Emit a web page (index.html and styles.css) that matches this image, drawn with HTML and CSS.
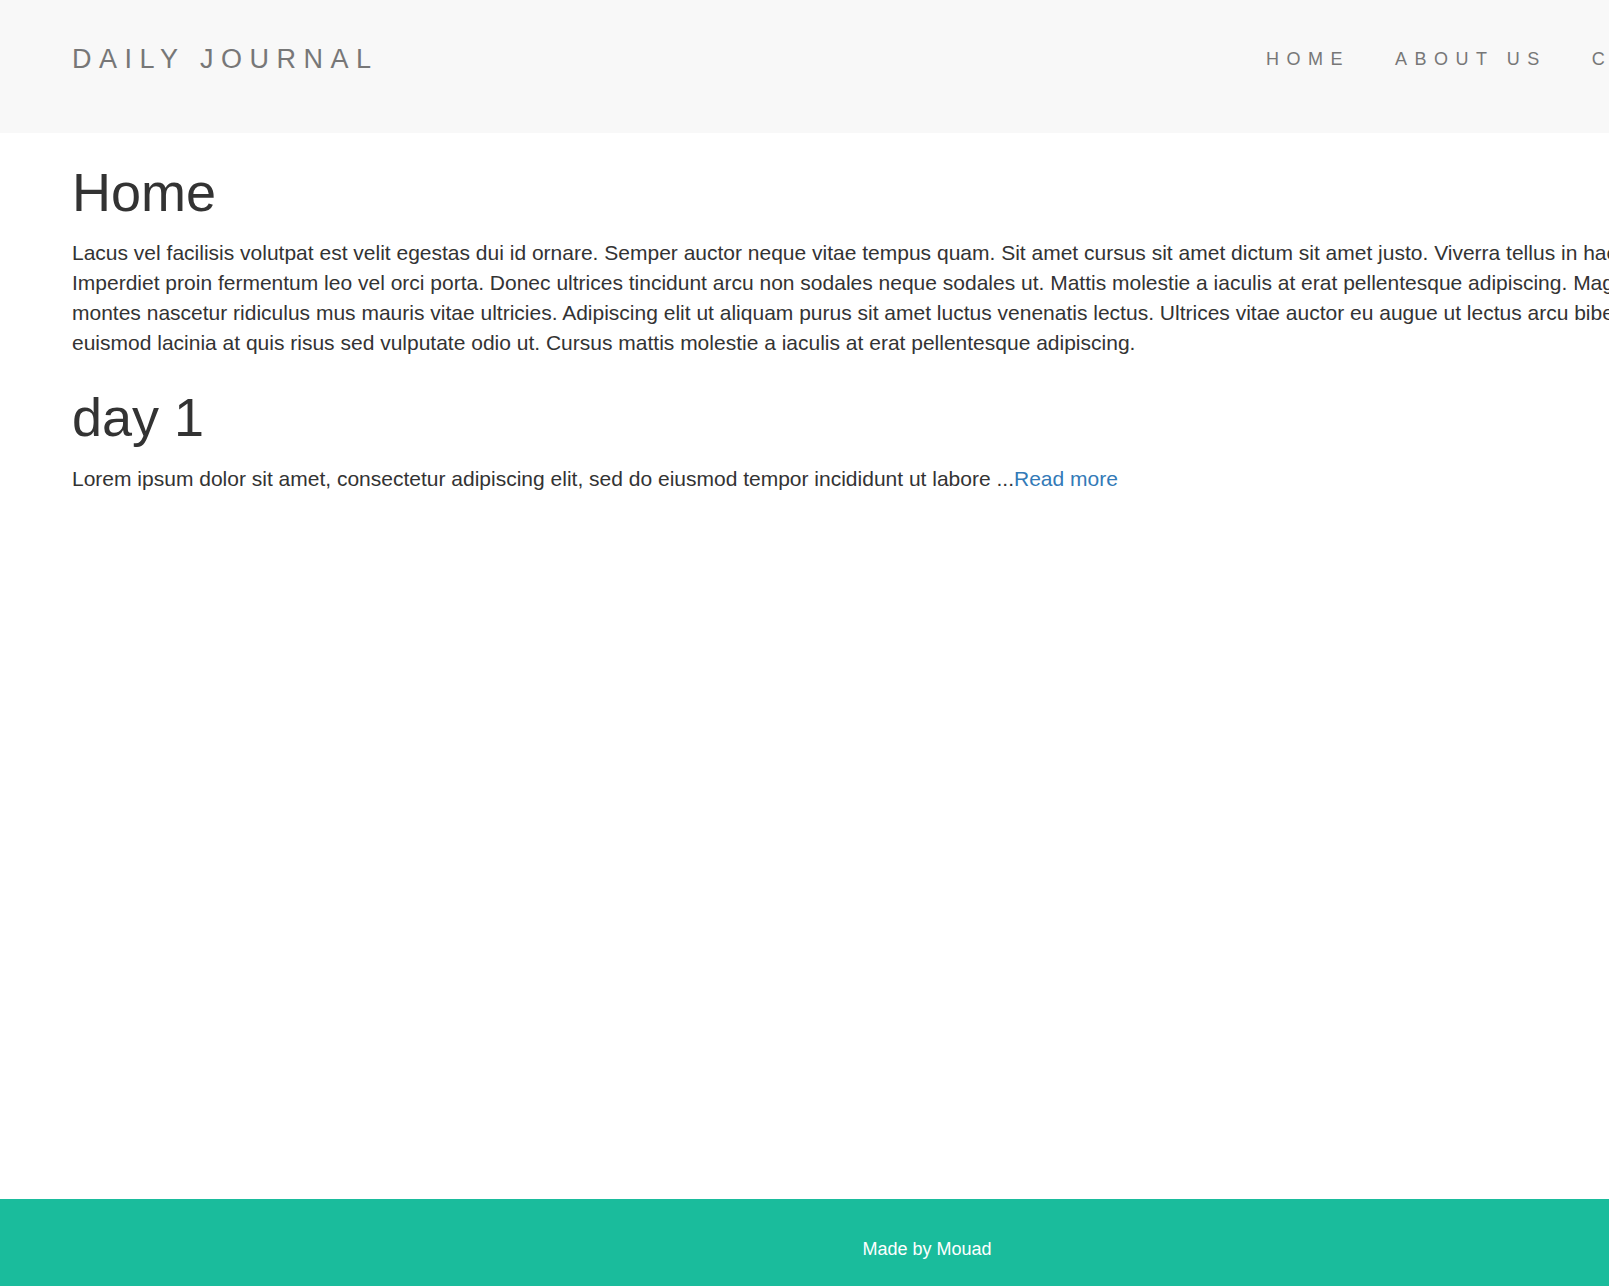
FILE: index.html
```html
<!DOCTYPE html>
<html lang="en">
<head>
<meta charset="utf-8">
<title>Daily Journal</title>
<link rel="stylesheet" href="styles.css">
</head>
<body>
<div class="page">
  <header class="navbar">
    <div class="container nav-inner">
      <a class="brand" href="#">DAILY JOURNAL</a>
      <ul class="nav">
        <li><a href="#">HOME</a></li>
        <li><a href="#">ABOUT US</a></li>
        <li><a href="#">CONTACT US</a></li>
      </ul>
    </div>
  </header>
  <main class="container content">
    <h1 class="title">Home</h1>
    <p class="text">Lacus vel facilisis volutpat est velit egestas dui id ornare. Semper auctor neque vitae tempus quam. Sit amet cursus sit amet dictum sit amet justo. Viverra tellus in hac habitasse. Imperdiet proin fermentum leo vel orci porta. Donec ultrices tincidunt arcu non sodales neque sodales ut. Mattis molestie a iaculis at erat pellentesque adipiscing. Magnis dis parturient montes nascetur ridiculus mus mauris vitae ultricies. Adipiscing elit ut aliquam purus sit amet luctus venenatis lectus. Ultrices vitae auctor eu augue ut lectus arcu bibendum at. Odio euismod lacinia at quis risus sed vulputate odio ut. Cursus mattis molestie a iaculis at erat pellentesque adipiscing.</p>
    <h1 class="title">day 1</h1>
    <p class="text">Lorem ipsum dolor sit amet, consectetur adipiscing elit, sed do eiusmod tempor incididunt ut labore ...<a class="more" href="#">Read more</a></p>
  </main>
  <footer class="footer">
    <p class="footer-text">Made by Mouad</p>
  </footer>
</div>
</body>
</html>
```
FILE: styles.css
```css
html, body {
  margin: 0;
  padding: 0;
  overflow: hidden;
}
body {
  font-family: "Liberation Sans", Arial, sans-serif;
  color: #333;
  background: #fff;
}
.page {
  width: 1854px;
  min-height: 1349px;
  display: flex;
  flex-direction: column;
}
.container {
  width: 1755px;
  margin: 0 auto;
  padding: 0 22.5px;
  box-sizing: border-box;
}
.navbar {
  background: #f8f8f8;
  height: 133px;
  box-sizing: border-box;
  padding-top: 44px;
}
.nav-inner {
  display: flex;
  justify-content: space-between;
  align-items: flex-start;
}
.brand {
  font-size: 27px;
  line-height: 30px;
  letter-spacing: 7.5px;
  color: #777;
  text-decoration: none;
}
.nav {
  list-style: none;
  margin: 0 -22.5px 0 0;
  padding: 0;
  display: flex;
}
.nav a {
  display: block;
  padding: 0 22.5px;
  font-size: 18px;
  line-height: 30px;
  letter-spacing: 7.5px;
  color: #777;
  text-decoration: none;
}
.content {
  padding-top: 0;
}
.title {
  font-size: 54px;
  font-weight: normal;
  line-height: 1.1;
  margin: 30px 0 16px;
  color: #333;
}
.text {
  font-size: 21px;
  line-height: 30px;
  margin: 0 0 15px;
}
.more {
  color: #337ab7;
  text-decoration: none;
}
.footer {
  margin-top: auto;
  height: 150px;
  background: #1abc9c;
  text-align: center;
}
.footer-text {
  margin: 37.5px 0 0;
  font-size: 18px;
  line-height: 25.7px;
  color: #fff;
}
```
